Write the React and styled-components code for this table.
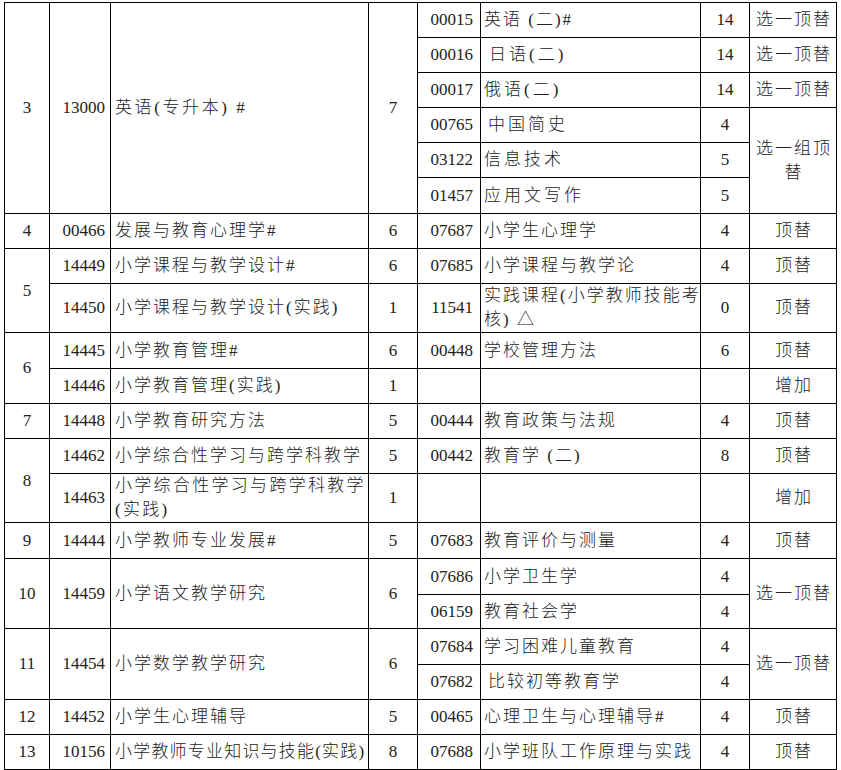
import styled, { createGlobalStyle } from 'styled-components';

const GlobalStyle = createGlobalStyle`
  html, body {
    margin: 0;
    padding: 0;
    overflow: hidden;
    background: #ffffff;
  }
  body {
    font-family: 'Liberation Serif', 'Noto Sans CJK SC', serif;
    color: #222222;
  }
`;

const Page = styled.div`
  padding: 2px 0 0 4px;
  height: 770px;
  box-sizing: border-box;
  overflow: hidden;
`;

const Table = styled.table`
  width: 833px;
  table-layout: fixed;
  border-collapse: separate;
  border-spacing: 0;
  border-top: 1px solid #000;
  border-left: 1px solid #000;
`;

const Col = styled.col`
  width: ${({ $w }) => $w}px;
`;

const Row = styled.tr`
  height: ${({ $h }) => $h || 35}px;
`;

const Cell = styled.td`
  box-sizing: border-box;
  border-right: 1px solid #000;
  border-bottom: 1px solid #000;
  padding: 0;
  vertical-align: middle;
  font-size: 17px;
  line-height: 24px;
  white-space: nowrap;
  overflow: visible;
`;

const SeqCell = styled(Cell)`
  text-align: center;
`;

const CodeCell = styled(Cell)`
  text-align: right;
  padding-right: ${({ $right }) => ($right ? 7 : 5)}px;
`;

const NameCell = styled(Cell)`
  text-align: left;
  padding-left: ${({ $pad }) => $pad ?? 4}px;
  letter-spacing: ${({ $ls }) => $ls ?? 2}px;
  font-weight: 300;
`;

const CreditCell = styled(Cell)`
  text-align: center;
`;

const NoteCell = styled(Cell)`
  text-align: center;
  white-space: normal;
  letter-spacing: 2px;
  font-weight: 300;
  padding: 0 2px 0 4px;
`;

function App() {
  return (
    <>
      <GlobalStyle />
      <Page>
        <Table>
          <colgroup>
            <Col $w={45} />
            <Col $w={61} />
            <Col $w={258} />
            <Col $w={49} />
            <Col $w={63} />
            <Col $w={220} />
            <Col $w={49} />
            <Col $w={87} />
          </colgroup>
          <tbody>
            <Row $h={35}>
              <SeqCell rowSpan={6}>3</SeqCell>
              <CodeCell rowSpan={6}>13000</CodeCell>
              <NameCell rowSpan={6} $ls={2.6}>英语(专升本) #</NameCell>
              <CreditCell rowSpan={6}>7</CreditCell>
              <CodeCell $right>00015</CodeCell>
              <NameCell $pad={3}>英语 (二)#</NameCell>
              <CreditCell>14</CreditCell>
              <NoteCell>选一顶替</NoteCell>
            </Row>
            <Row $h={35}>
              <CodeCell $right>00016</CodeCell>
              <NameCell $pad={8} $ls={3}>日语(二)</NameCell>
              <CreditCell>14</CreditCell>
              <NoteCell>选一顶替</NoteCell>
            </Row>
            <Row $h={35}>
              <CodeCell $right>00017</CodeCell>
              <NameCell $pad={3} $ls={3}>俄语(二)</NameCell>
              <CreditCell>14</CreditCell>
              <NoteCell>选一顶替</NoteCell>
            </Row>
            <Row $h={35}>
              <CodeCell $right>00765</CodeCell>
              <NameCell $pad={7} $ls={3}>中国简史</NameCell>
              <CreditCell>4</CreditCell>
              <NoteCell rowSpan={3}>选一组顶替</NoteCell>
            </Row>
            <Row $h={35}>
              <CodeCell $right>03122</CodeCell>
              <NameCell $pad={3} $ls={3}>信息技术</NameCell>
              <CreditCell>5</CreditCell>
            </Row>
            <Row $h={36}>
              <CodeCell $right>01457</CodeCell>
              <NameCell $pad={3} $ls={3}>应用文写作</NameCell>
              <CreditCell>5</CreditCell>
            </Row>

            <Row $h={35}>
              <SeqCell>4</SeqCell>
              <CodeCell>00466</CodeCell>
              <NameCell>发展与教育心理学#</NameCell>
              <CreditCell>6</CreditCell>
              <CodeCell $right>07687</CodeCell>
              <NameCell $pad={3}>小学生心理学</NameCell>
              <CreditCell>4</CreditCell>
              <NoteCell>顶替</NoteCell>
            </Row>

            <Row $h={35}>
              <SeqCell rowSpan={2}>5</SeqCell>
              <CodeCell>14449</CodeCell>
              <NameCell>小学课程与教学设计#</NameCell>
              <CreditCell>6</CreditCell>
              <CodeCell $right>07685</CodeCell>
              <NameCell $pad={3}>小学课程与教学论</NameCell>
              <CreditCell>4</CreditCell>
              <NoteCell>顶替</NoteCell>
            </Row>
            <Row $h={48}>
              <CodeCell>14450</CodeCell>
              <NameCell>小学课程与教学设计(实践)</NameCell>
              <CreditCell>1</CreditCell>
              <CodeCell $right>11541</CodeCell>
              <NameCell $pad={3}>
                实践课程(小学教师技能考
                <br />
                核) △
              </NameCell>
              <CreditCell>0</CreditCell>
              <NoteCell>顶替</NoteCell>
            </Row>

            <Row $h={36}>
              <SeqCell rowSpan={2}>6</SeqCell>
              <CodeCell>14445</CodeCell>
              <NameCell>小学教育管理#</NameCell>
              <CreditCell>6</CreditCell>
              <CodeCell $right>00448</CodeCell>
              <NameCell $pad={3}>学校管理方法</NameCell>
              <CreditCell>6</CreditCell>
              <NoteCell>顶替</NoteCell>
            </Row>
            <Row $h={35}>
              <CodeCell>14446</CodeCell>
              <NameCell>小学教育管理(实践)</NameCell>
              <CreditCell>1</CreditCell>
              <CodeCell $right />
              <NameCell />
              <CreditCell />
              <NoteCell>增加</NoteCell>
            </Row>

            <Row $h={35}>
              <SeqCell>7</SeqCell>
              <CodeCell>14448</CodeCell>
              <NameCell>小学教育研究方法</NameCell>
              <CreditCell>5</CreditCell>
              <CodeCell $right>00444</CodeCell>
              <NameCell $pad={3}>教育政策与法规</NameCell>
              <CreditCell>4</CreditCell>
              <NoteCell>顶替</NoteCell>
            </Row>

            <Row $h={35}>
              <SeqCell rowSpan={2}>8</SeqCell>
              <CodeCell>14462</CodeCell>
              <NameCell>小学综合性学习与跨学科教学</NameCell>
              <CreditCell>5</CreditCell>
              <CodeCell $right>00442</CodeCell>
              <NameCell $pad={3}>教育学 (二)</NameCell>
              <CreditCell>8</CreditCell>
              <NoteCell>顶替</NoteCell>
            </Row>
            <Row $h={48}>
              <CodeCell>14463</CodeCell>
              <NameCell $ls={2.3}>
                小学综合性学习与跨学科教学
                <br />
                (实践)
              </NameCell>
              <CreditCell>1</CreditCell>
              <CodeCell $right />
              <NameCell />
              <CreditCell />
              <NoteCell>增加</NoteCell>
            </Row>

            <Row $h={36}>
              <SeqCell>9</SeqCell>
              <CodeCell>14444</CodeCell>
              <NameCell>小学教师专业发展#</NameCell>
              <CreditCell>5</CreditCell>
              <CodeCell $right>07683</CodeCell>
              <NameCell $pad={3}>教育评价与测量</NameCell>
              <CreditCell>4</CreditCell>
              <NoteCell>顶替</NoteCell>
            </Row>

            <Row $h={36}>
              <SeqCell rowSpan={2}>10</SeqCell>
              <CodeCell rowSpan={2}>14459</CodeCell>
              <NameCell rowSpan={2}>小学语文教学研究</NameCell>
              <CreditCell rowSpan={2}>6</CreditCell>
              <CodeCell $right>07686</CodeCell>
              <NameCell $pad={3}>小学卫生学</NameCell>
              <CreditCell>4</CreditCell>
              <NoteCell rowSpan={2}>选一顶替</NoteCell>
            </Row>
            <Row $h={34}>
              <CodeCell $right>06159</CodeCell>
              <NameCell $pad={3}>教育社会学</NameCell>
              <CreditCell>4</CreditCell>
            </Row>

            <Row $h={36}>
              <SeqCell rowSpan={2}>11</SeqCell>
              <CodeCell rowSpan={2}>14454</CodeCell>
              <NameCell rowSpan={2}>小学数学教学研究</NameCell>
              <CreditCell rowSpan={2}>6</CreditCell>
              <CodeCell $right>07684</CodeCell>
              <NameCell $pad={3}>学习困难儿童教育</NameCell>
              <CreditCell>4</CreditCell>
              <NoteCell rowSpan={2}>选一顶替</NoteCell>
            </Row>
            <Row $h={35}>
              <CodeCell $right>07682</CodeCell>
              <NameCell $pad={7}>比较初等教育学</NameCell>
              <CreditCell>4</CreditCell>
            </Row>

            <Row $h={35}>
              <SeqCell>12</SeqCell>
              <CodeCell>14452</CodeCell>
              <NameCell>小学生心理辅导</NameCell>
              <CreditCell>5</CreditCell>
              <CodeCell $right>00465</CodeCell>
              <NameCell $pad={3}>心理卫生与心理辅导#</NameCell>
              <CreditCell>4</CreditCell>
              <NoteCell>顶替</NoteCell>
            </Row>
            <Row $h={35}>
              <SeqCell>13</SeqCell>
              <CodeCell>10156</CodeCell>
              <NameCell $ls={1.2}>小学教师专业知识与技能(实践)</NameCell>
              <CreditCell>8</CreditCell>
              <CodeCell $right>07688</CodeCell>
              <NameCell $pad={3}>小学班队工作原理与实践</NameCell>
              <CreditCell>4</CreditCell>
              <NoteCell>顶替</NoteCell>
            </Row>
            <Row $h={35}>
              <SeqCell />
              <CodeCell />
              <NameCell />
              <CreditCell />
              <CodeCell $right />
              <NameCell />
              <CreditCell />
              <NoteCell />
            </Row>
          </tbody>
        </Table>
      </Page>
    </>
  );
}

export default App;
